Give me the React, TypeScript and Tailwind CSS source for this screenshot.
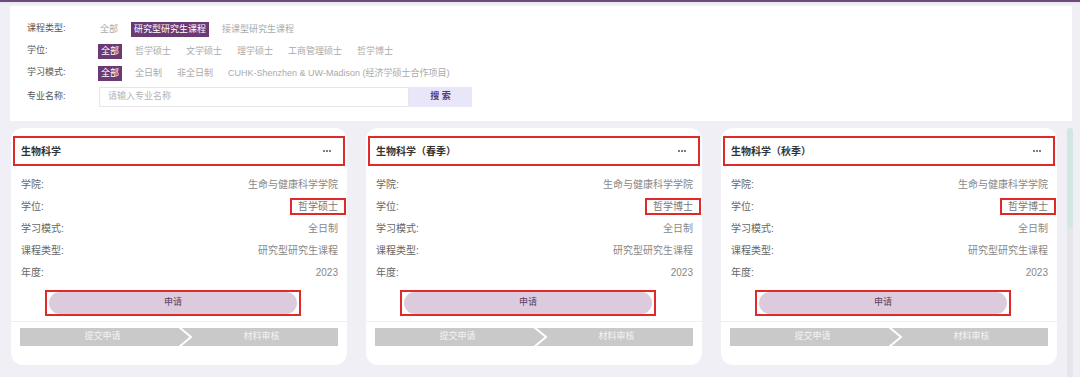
import React from 'react';

const FONT = { fontFamily: '"Liberation Sans", "Noto Sans CJK SC", sans-serif' };

interface FilterRowProps {
  label: string;
  options: string[];
  active: number;
}

function FilterRow({ label, options, active }: FilterRowProps) {
  return (
    <div className="flex h-[22px] items-center text-[9px]">
      <div className="w-[88px] pl-[17px] text-[#555]">{label}</div>
      <div className="flex items-center gap-[11px]">
        {options.map((opt, i) => (
          <span
            key={opt}
            className={
              i === active
                ? 'bg-[#6b3a72] px-[3px] leading-[15px] text-white'
                : 'px-[2px] leading-[15px] text-[#aaa]'
            }
          >
            {opt}
          </span>
        ))}
      </div>
    </div>
  );
}

interface Course {
  title: string;
  degree: string;
}

const courses: Course[] = [
  { title: '生物科学', degree: '哲学硕士' },
  { title: '生物科学（春季）', degree: '哲学博士' },
  { title: '生物科学（秋季）', degree: '哲学博士' },
];

function CourseCard({ course }: { course: Course }) {
  const rows: [string, string, boolean?][] = [
    ['学院:', '生命与健康科学学院'],
    ['学位:', course.degree, true],
    ['学习模式:', '全日制'],
    ['课程类型:', '研究型研究生课程'],
    ['年度:', '2023'],
  ];
  return (
    <div className="flex w-[336px] flex-col rounded-[12px] bg-white pb-[19px]">
      <div className="mx-[2px] mt-[8px] flex h-[30px] items-center justify-between border-2 border-[#e02a2a] pl-[6px] pr-[12px]">
        <span className="text-[10px] font-bold text-[#333]">{course.title}</span>
        <span className="flex gap-[1px]">
          <span className="h-[2px] w-[2px] rounded-full bg-[#555]" />
          <span className="h-[2px] w-[2px] rounded-full bg-[#555]" />
          <span className="h-[2px] w-[2px] rounded-full bg-[#555]" />
        </span>
      </div>
      <div className="mt-[7px] flex flex-col pl-[10px] pr-[9px] text-[10px]">
        {rows.map(([k, v, boxed]) => (
          <div key={k} className="flex h-[22px] items-center justify-between">
            <span className="text-[#666]">{k}</span>
            {boxed ? (
              <span className="-mr-[8px] flex h-[17px] items-center border-2 border-[#e02a2a] px-[6px] text-[#777]">
                {v}
              </span>
            ) : (
              <span className="text-[#888]">{v}</span>
            )}
          </div>
        ))}
      </div>
      <div className="ml-[34px] mt-[7px] flex h-[26px] w-[256px] items-center border-2 border-[#e02a2a] pl-[2px] pr-[2px]">
        <div className="flex h-[22px] flex-1 items-center justify-center rounded-full bg-[#dccbdd] text-[9px] text-[#5b3c60]">
          申请
        </div>
      </div>
      <div className="mt-[5px] h-px bg-[#efeff2]" />
      <div className="relative mx-[9px] mt-[6px] flex h-[18px] bg-[#c9c9c9] text-[9px] text-[#f4f4f4]">
        <div className="flex w-[165px] items-center justify-center">提交申请</div>
        <div className="flex flex-1 items-center justify-center">材料审核</div>
        <svg className="absolute left-[158px] top-0" width="16" height="18" viewBox="0 0 16 18">
          <path d="M1 -1 L13 9 L1 19" fill="none" stroke="#fff" strokeWidth="2" />
        </svg>
      </div>
    </div>
  );
}

export default function App() {
  return (
    <div className="h-[377px] w-[1080px] overflow-hidden bg-[#efeff5]" style={FONT}>
      <div className="h-[2px] bg-[#6e4a7c]" />
      <div className="h-[2px] bg-[#e3ebec]" />
      <div className="ml-[10px] mt-[2px] w-[1062px] bg-white pb-[14px] pt-[12px]">
        <FilterRow label="课程类型:" options={['全部', '研究型研究生课程', '接课型研究生课程']} active={1} />
        <FilterRow
          label="学位:"
          options={['全部', '哲学硕士', '文学硕士', '理学硕士', '工商管理硕士', '哲学博士']}
          active={0}
        />
        <FilterRow
          label="学习模式:"
          options={['全部', '全日制', '非全日制', 'CUHK-Shenzhen & UW-Madison (经济学硕士合作项目)']}
          active={0}
        />
        <div className="mt-[3px] flex h-[20px] items-center text-[9px]">
          <div className="w-[89px] pl-[17px] text-[#555]">专业名称:</div>
          <div className="flex h-[20px] w-[310px] items-center border border-[#e6e6ea] pl-[8px] text-[#b5b5b5]">
            请输入专业名称
          </div>
          <div className="flex h-[20px] w-[63px] items-center justify-center bg-[#e8e6f8] font-semibold text-[#5b3c6a]">
            搜 索
          </div>
        </div>
      </div>
      <div className="mt-[7px] flex items-start">
        <div className="ml-[11px] flex items-start gap-[19px]">
          {courses.map((c) => (
            <CourseCard key={c.title} course={c} />
          ))}
        </div>
        <div className="ml-[10px] h-[260px] w-[6px] rounded-full bg-[#e6e6ea]">
          <div className="h-[100px] rounded-full bg-[#d3e7e2]" />
        </div>
      </div>
    </div>
  );
}
